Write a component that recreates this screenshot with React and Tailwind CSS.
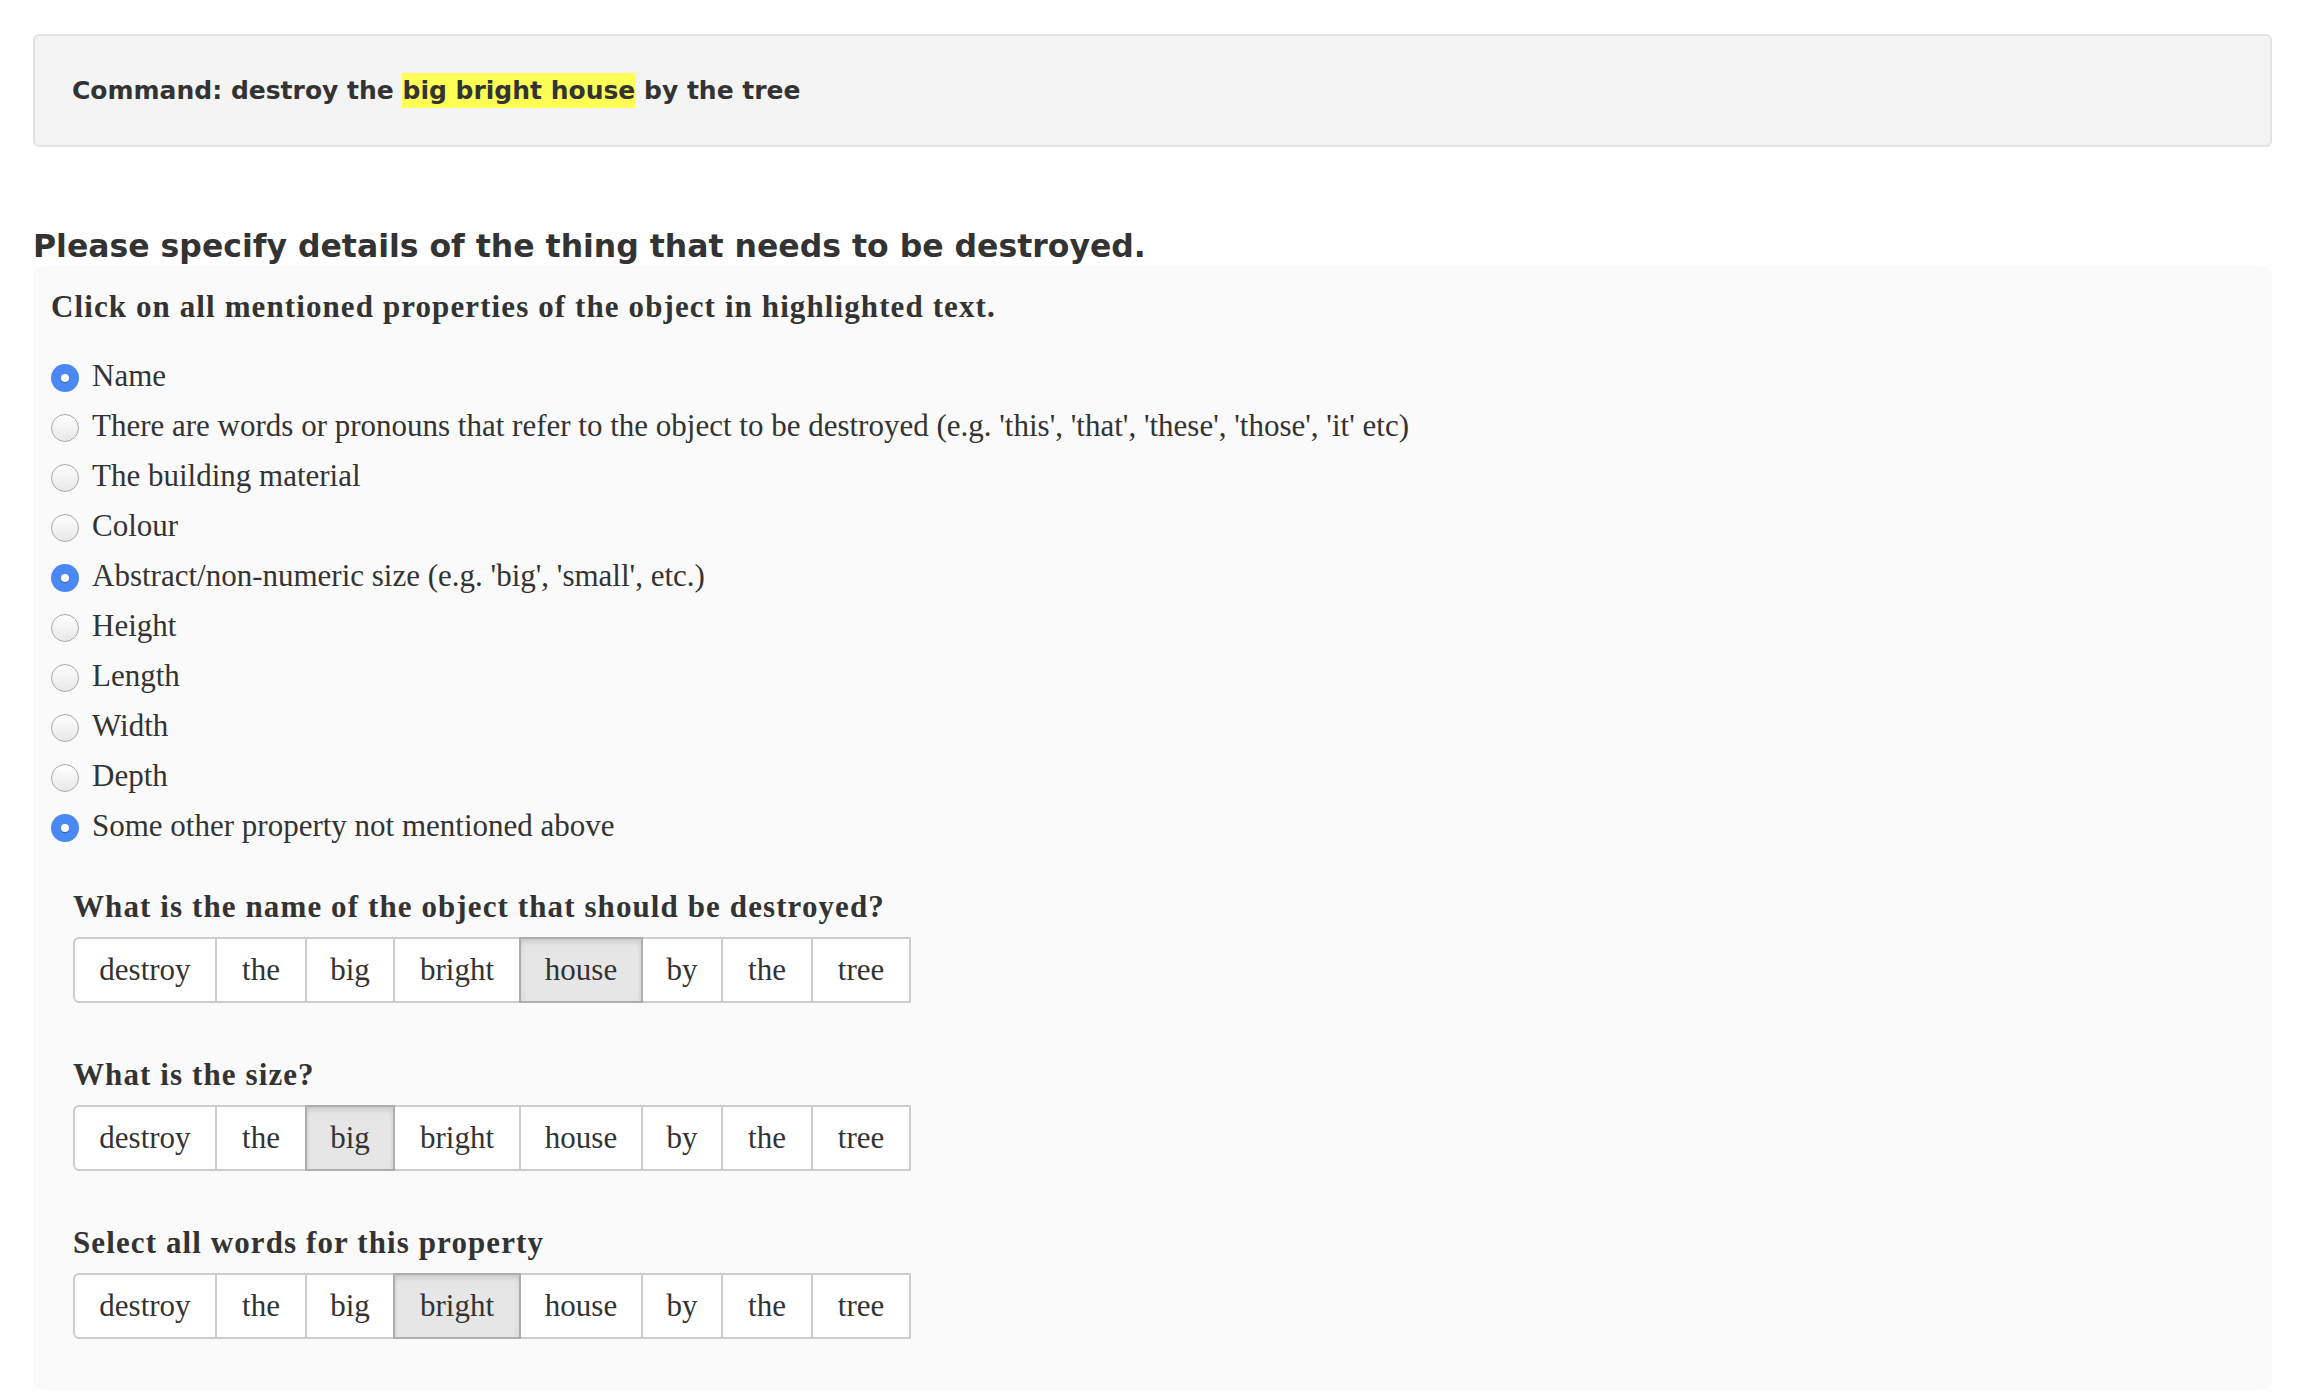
import { useState } from 'react'

const PROPERTIES = [
  { label: 'Name', checked: true },
  { label: "There are words or pronouns that refer to the object to be destroyed (e.g. 'this', 'that', 'these', 'those', 'it' etc)" },
  { label: 'The building material' },
  { label: 'Colour' },
  { label: "Abstract/non-numeric size (e.g. 'big', 'small', etc.)", checked: true },
  { label: 'Height' },
  { label: 'Length' },
  { label: 'Width' },
  { label: 'Depth' },
  { label: 'Some other property not mentioned above', checked: true },
]

const WORDS = [
  { text: 'destroy', w: 'w-[144px]' },
  { text: 'the', w: 'w-[92px]' },
  { text: 'big', w: 'w-[90px]' },
  { text: 'bright', w: 'w-[128px]' },
  { text: 'house', w: 'w-[124px]' },
  { text: 'by', w: 'w-[82px]' },
  { text: 'the', w: 'w-[92px]' },
  { text: 'tree', w: 'w-[100px]' },
]

const QUESTIONS = [
  { q: 'What is the name of the object that should be destroyed?', selected: 4 },
  { q: 'What is the size?', selected: 2 },
  { q: 'Select all words for this property', selected: 3 },
]

const Radio = ({ checked }) =>
  checked ? (
    <span className="flex items-center justify-center w-[28px] h-[28px] rounded-full bg-[#4a89f3] shrink-0">
      <span className="w-[8px] h-[8px] rounded-full bg-white shadow-[0_1px_1px_rgba(0,0,0,0.3)]" />
    </span>
  ) : (
    <span className="w-[28px] h-[28px] rounded-full border border-[#a9a9a9] bg-gradient-to-b from-white to-[#e8e8e8] shrink-0" />
  )

const WordGroup = ({ selected }) => (
  <div className="flex h-[66px] pl-[2px]">
    {WORDS.map((item, i) => (
      <div
        key={i}
        className={`-ml-[2px] flex items-center justify-center border-2 ${item.w}${i === 0 ? ' rounded-l-[6px]' : ''}${
          i === selected
            ? ' relative z-10 bg-[#e6e6e6] border-[#adadad] shadow-[inset_0_3px_5px_rgba(0,0,0,0.125)]'
            : ' bg-white border-[#cccccc]'
        }`}
      >
        {item.text}
      </div>
    ))}
  </div>
)

const App = () => {
  const [props] = useState(PROPERTIES)

  return (
    <div className="min-h-[1392px] bg-white pl-[33px] pr-[36px] pt-[34px] text-[#333333]">
      <div className="h-[113px] flex items-center pl-[37px] bg-[#f4f4f4] border-2 border-[#e3e3e3] rounded-[6px] font-['DejaVu_Sans',Verdana,sans-serif] font-bold text-[25px]">
        <span>
          Command: destroy the <span className="bg-[#ffff55] py-[3px]">big bright house</span> by the tree
        </span>
      </div>

      <h2 className="mt-[80px] font-['DejaVu_Sans',Verdana,sans-serif] font-bold text-[31.5px] leading-[39px]">
        Please specify details of the thing that needs to be destroyed.
      </h2>

      <div className="bg-[#fafafa] rounded-[10px] pl-[18px] pt-[16px] pb-[51px] font-['Liberation_Serif',Georgia,serif] text-[31px]">
        <div className="h-[50px] flex items-center font-bold tracking-[1.1px]">
          Click on all mentioned properties of the object in highlighted text.
        </div>

        <div className="mt-[21px] flex flex-col">
          {props.map((p) => (
            <div key={p.label} className="h-[50px] flex items-center gap-[13px]">
              <Radio checked={p.checked} />
              <span className="-mt-[3px]">{p.label}</span>
            </div>
          ))}
        </div>

        <div className="pl-[22px]">
          {QUESTIONS.map((item, i) => (
            <div key={item.q} className={i === 0 ? 'mt-[34px]' : 'mt-[52px]'}>
              <div className="h-[40px] flex items-center font-bold tracking-[1.1px] mb-[10px]">{item.q}</div>
              <WordGroup selected={item.selected} />
            </div>
          ))}
        </div>
      </div>
    </div>
  )
}

export default App
